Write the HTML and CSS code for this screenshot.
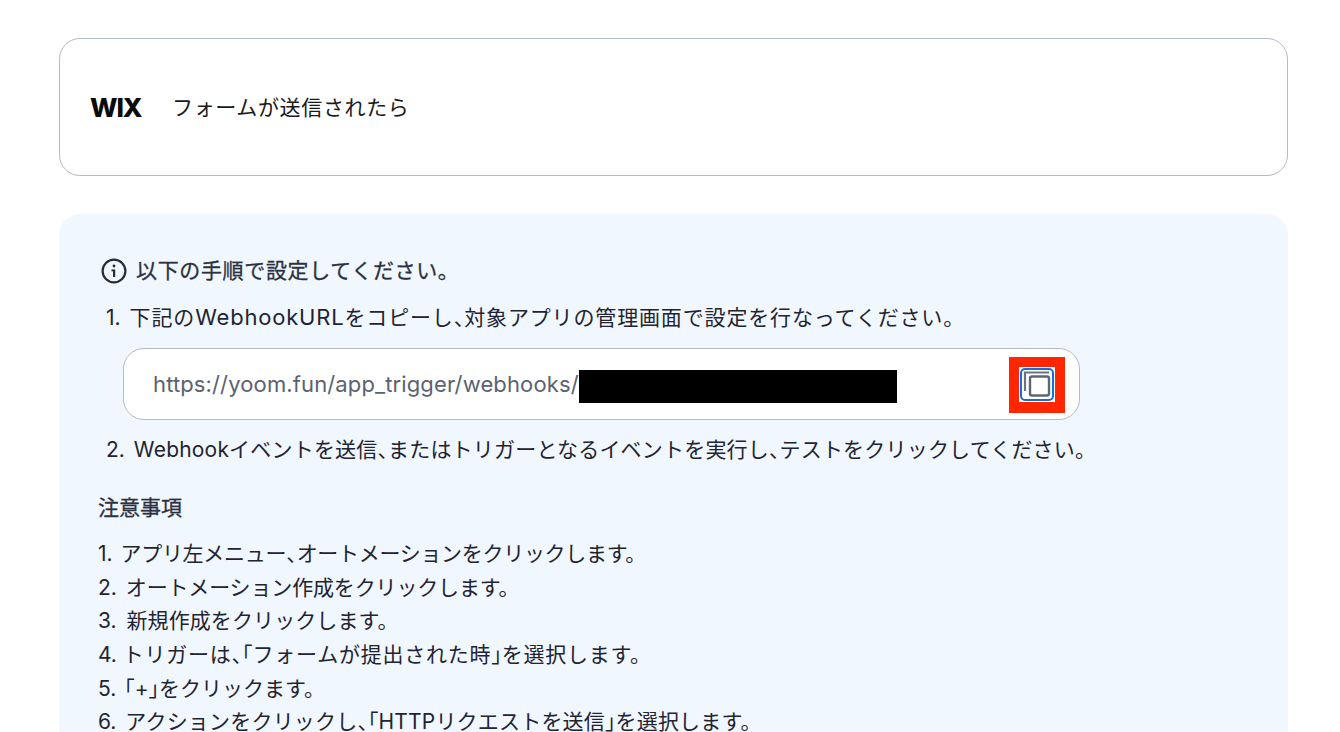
FILE: index.html
```html
<!DOCTYPE html>
<html lang="ja">
<head>
<meta charset="utf-8">
<title>WIX</title>
<link rel="stylesheet" href="styles.css">
</head>
<body>
<main class="page">
  <section class="trigger">
    <span class="brand">WIX</span>
    <span class="trigger-label">フォームが送信されたら</span>
  </section>
  <section class="panel">
    <div class="notice">
      <svg class="info" viewBox="0 0 26 26" width="26" height="26" aria-hidden="true"><circle cx="13" cy="13" r="11.4" fill="none" stroke="#252b3a" stroke-width="2.2"/><rect x="12" y="11.500" width="2.200" height="7.500" fill="#252b3a"/><rect x="10.500" y="11.500" width="2" height="1.800" fill="#252b3a"/><circle cx="13" cy="8" r="1.400" fill="#252b3a"/></svg>
      <span>以下の手順で設定してください。</span>
    </div>
    <div class="step step-first"><span class="num">1.</span><span>下記の<span class="latin">WebhookURL</span>をコピーし<span class="hw">、</span>対象アプリの管理画面で設定を行なってください。</span></div>
    <div class="url-box">
      <span class="url">https://yoom.fun/app_trigger/webhooks/</span>
      <span class="mask"></span>
      <span class="copy-mark">
        <svg class="copy" viewBox="0 0 36 36" width="36" height="36" aria-hidden="true"><rect x="0" y="0" width="36" height="35" fill="#fff"/><rect x="2" y="2" width="32" height="31" rx="4" fill="#fff" stroke="#0f6fe0" stroke-width="2"/><path d="M6 24V5.500H30" fill="none" stroke="#6b7280" stroke-width="2.200"/><rect x="11" y="9.500" width="19" height="19" rx="2" fill="#fff" stroke="#5f6673" stroke-width="2.400"/></svg>
      </span>
    </div>
    <div class="step step-second"><span class="num">2.</span><span>Webhookイベントを送信<span class="hw">、</span>またはトリガーとなるイベントを実行し<span class="hw">、</span>テストをクリックしてください。</span></div>
    <h2 class="caution">注意事項</h2>
    <ol class="notes">
      <li>アプリ左メニュー<span class="hw">、</span>オートメーションをクリックします。</li>
      <li>オートメーション作成をクリックします。</li>
      <li>新規作成をクリックします。</li>
      <li>トリガーは<span class="hw">、「</span>フォームが提出された時<span class="hw">」</span>を選択します。</li>
      <li><span class="hw">「</span>+<span class="hw">」</span>をクリックます。</li>
      <li>アクションをクリックし<span class="hw">、「</span>HTTPリクエストを送信<span class="hw">」</span>を選択します。</li>
    </ol>
  </section>
</main>
</body>
</html>
```
FILE: styles.css
```css
* { box-sizing: border-box; }
html, body { margin: 0; height: 100%; overflow: hidden; background: #fff; }
body { font-family: Inter, "Noto Sans CJK JP", sans-serif; font-size: 21px; line-height: 33.6px; color: #1f2430; }
.page { padding: 38px 52px 0 59px; display: flex; flex-direction: column; gap: 38px; }
.trigger { height: 138px; border: 1px solid #b4bcc8; border-radius: 21px; display: flex; align-items: center; padding: 2px 0 0 30px; }
.brand { font-weight: 800; font-size: 26px; letter-spacing: -1.1px; color: #0a0a0a; width: 82px; }
.trigger-label { color: #1a1a1a; letter-spacing: 0.65px; }
.panel { background: #f1f7ff; border-radius: 21px; padding: 40px 42px 0 40px; height: 600px; }
.notice { display: flex; align-items: center; gap: 9px; height: 34px; color: #2b3140; margin-left: 2px; letter-spacing: 0.65px; -webkit-text-stroke: 0.3px #2b3140; }
.step { display: flex; white-space: nowrap; margin-left: 7px; gap: 9px; }
.step-first { margin-top: 13px; letter-spacing: 0.85px; }
.step-second { margin-top: 13px; letter-spacing: 0.2px; }
.num { letter-spacing: 0; }
.latin { font-size: 22px; letter-spacing: 0.8px; }
.hw { font-feature-settings: "halt"; letter-spacing: 0; }
.url-box { margin: 13px 0 0 24px; width: 957px; height: 72px; border: 1px solid #b4bcc8; border-radius: 21px; background: #fff; display: flex; align-items: center; padding-left: 29px; position: relative; }
.url { color: #5b6270; font-size: 22px; letter-spacing: 0.13px; padding-top: 2px; }
.mask { width: 318px; height: 33px; background: #000; margin-top: 6px; }
.copy-mark { position: absolute; left: 885px; top: 8px; width: 56px; height: 56px; background: #ff2600; display: flex; align-items: center; justify-content: center; }
.caution { margin: 25px 0 0 -1px; font-size: 21px; line-height: 34px; font-weight: 400; color: #2b3140; -webkit-text-stroke: 0.3px #2b3140; }
.notes { margin: 12px 0 0 -1px; padding: 0; list-style: none; counter-reset: n; }
.notes li { counter-increment: n; white-space: nowrap; }
.notes li::before { content: counter(n) ". "; margin-right: 2px; letter-spacing: 0; }
.notes li:nth-child(1) { letter-spacing: -0.3px; }
.notes li:nth-child(2) { letter-spacing: -0.15px; }
.notes li:nth-child(2)::before { margin-right: 3px; }
.notes li:nth-child(3) { letter-spacing: 0.1px; }
.notes li:nth-child(3)::before { margin-right: 4px; }
.notes li:nth-child(4) { letter-spacing: 0.75px; }
.notes li:nth-child(4)::before { margin-right: 0; }
.notes li:nth-child(6) { letter-spacing: 0.2px; }
.notes li:nth-child(6)::before { margin-right: 3px; }
```
